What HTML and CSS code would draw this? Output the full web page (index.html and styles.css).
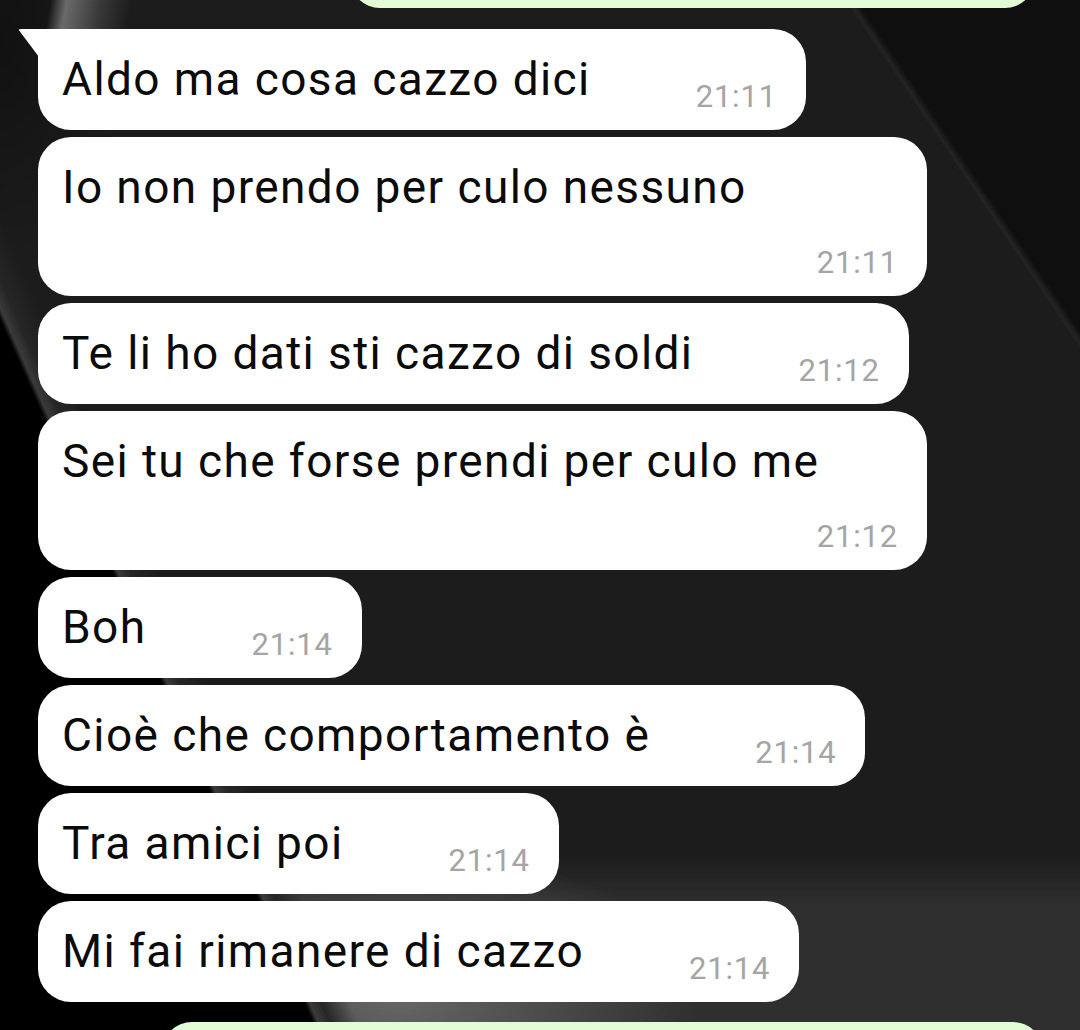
FILE: index.html
```html
<!DOCTYPE html>
<html lang="it">
<head>
	<meta charset="utf-8">
	<title>Chat</title>
	<meta name="viewport" content="width=device-width,initial-scale=1">
	<link rel="stylesheet" href="styles.css">
</head>
<body>

	<div class="chat">
		<div class="msg out top"></div>

		<div class="msg in first">
			<span class="text">Aldo ma cosa cazzo dici</span>
			<span class="time">21:11</span>
		</div>
		<div class="msg in">
			<span class="text">Io non prendo per culo nessuno</span>
			<span class="time">21:11</span>
		</div>
		<div class="msg in">
			<span class="text">Te li ho dati sti cazzo di soldi</span>
			<span class="time">21:12</span>
		</div>
		<div class="msg in">
			<span class="text">Sei tu che forse prendi per culo me</span>
			<span class="time">21:12</span>
		</div>
		<div class="msg in">
			<span class="text">Boh</span>
			<span class="time">21:14</span>
		</div>
		<div class="msg in">
			<span class="text">Cioè che comportamento è</span>
			<span class="time">21:14</span>
		</div>
		<div class="msg in">
			<span class="text">Tra amici poi</span>
			<span class="time">21:14</span>
		</div>
		<div class="msg in">
			<span class="text">Mi fai rimanere di cazzo</span>
			<span class="time">21:14</span>
		</div>

		<div class="msg out bottom"></div>
	</div>

</body>
</html>
```

FILE: styles.css
```css
*{
	margin: 0;
	padding: 0;
	box-sizing: border-box;
}

html, body{
	height: 100%;
	overflow: hidden;
}

body{
	font-family: Roboto, "Noto Sans", "Liberation Sans", sans-serif;
	background-color: #1c1c1c;
	background-image:
		/* streak top left */
		linear-gradient(100deg, transparent 50px, #6a6a6a 66px, #383838 100px, transparent 130px),
		/* black swirl on the left */
		linear-gradient(66deg, #000 0, #000 289px, #3a3a3a 294px, #262626 305px, rgba(30,30,30,0) 330px),
		/* light swirl at the bottom */
		radial-gradient(ellipse 300px 150px at 400px 1000px, #666, rgba(60,60,60,0)),
		/* dark top left corner */
		radial-gradient(ellipse 120px 220px at 0 40px, #111, rgba(17,17,17,0)),
		/* darker corner top right */
		linear-gradient(56deg, transparent 1276px, #242424 1279px, #0f0f0f 1286px),
		/* lighter bottom */
		linear-gradient(to bottom, transparent 855px, #2f2f2f 905px);
	background-size: 1080px 30px, 100% 100%, 100% 100%, 100% 100%, 100% 100%, 100% 100%;
	background-repeat: no-repeat;
}

.chat{
	height: 1030px;
	overflow: hidden;
	padding-left: 38px;
	display: flex;
	flex-direction: column;
	align-items: flex-start;
	gap: 7px;
}

.msg{
	border-radius: 33px;
	flex-shrink: 0;
}

/* received */
.msg.in{
	display: flex;
	flex-wrap: wrap;
	align-items: flex-start;
	column-gap: 105px;
	row-gap: 4px;
	max-width: 889px;
	padding: 23px 29px 15px 24px;
	background: #fff;
}
.msg.first{
	position: relative;
	border-top-left-radius: 0;
}
.msg.first::before{
	content: '';
	position: absolute;
	left: -20px;
	top: 0;
	width: 21px;
	height: 28px;
	background: #fff;
	border-top-left-radius: 3px;
	clip-path: polygon(0 0, 100% 0, 100% 100%);
}

.text{
	font-size: 46px;
	line-height: 54px;
	letter-spacing: 1.4px;
	color: #0b0b0b;
	white-space: nowrap;
}
.time{
	margin-top: 27px;
	margin-left: auto;
	font-size: 31px;
	line-height: 36px;
	letter-spacing: 0.8px;
	color: #a5a5a5;
	white-space: nowrap;
}

/* sent */
.msg.out{
	align-self: flex-end;
	height: 60px;
	background: #e2fdd6;
}
.msg.top{
	width: 685px;
	margin-top: -52px;
	margin-right: 45px;
	margin-bottom: 14px;
}
.msg.bottom{
	width: 881px;
	margin-top: 13px;
	margin-right: 37px;
}
```
